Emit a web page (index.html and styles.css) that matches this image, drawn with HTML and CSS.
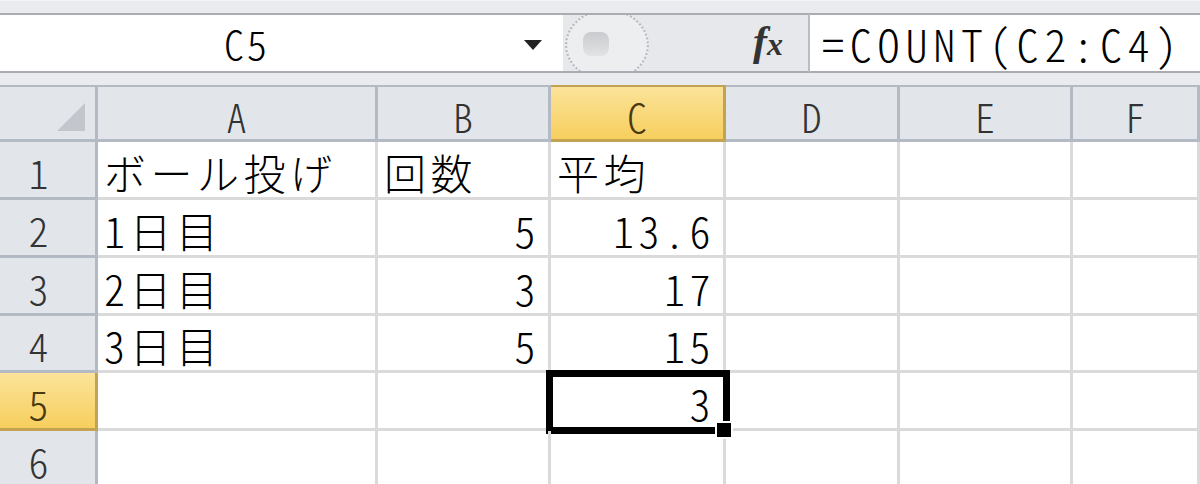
FILE: index.html
```html
<!DOCTYPE html>
<html lang="ja">
<head>
    <meta charset="UTF-8">
    <meta name="viewport" content="width=device-width, initial-scale=1.0">
    <title>ボール投げ</title>
    <link rel="stylesheet" href="styles.css">
</head>
<body>

<div class="formula-bar">
    <div class="name-box">
        <span class="name-text">C5</span>
        <span class="drop-arrow"></span>
    </div>
    <div class="bar-mid">
        <span class="round-btn"><span class="btn-dot"></span></span>
        <span class="fx">f<span class="fx-x">x</span></span>
    </div>
    <div class="formula-input">=COUNT(C2:C4)</div>
</div>

<div class="sheet">
    <div class="corner"><span class="corner-tri"></span></div>
    <div class="col-head">A</div>
    <div class="col-head">B</div>
    <div class="col-head active">C</div>
    <div class="col-head">D</div>
    <div class="col-head">E</div>
    <div class="col-head">F</div>

    <div class="row-head">1</div>
    <div class="cell">ボール投げ</div>
    <div class="cell">回数</div>
    <div class="cell">平均</div>
    <div class="cell"></div>
    <div class="cell"></div>
    <div class="cell"></div>

    <div class="row-head">2</div>
    <div class="cell">1日目</div>
    <div class="cell num">5</div>
    <div class="cell num">13.6</div>
    <div class="cell"></div>
    <div class="cell"></div>
    <div class="cell"></div>

    <div class="row-head">3</div>
    <div class="cell">2日目</div>
    <div class="cell num">3</div>
    <div class="cell num">17</div>
    <div class="cell"></div>
    <div class="cell"></div>
    <div class="cell"></div>

    <div class="row-head">4</div>
    <div class="cell">3日目</div>
    <div class="cell num">5</div>
    <div class="cell num">15</div>
    <div class="cell"></div>
    <div class="cell"></div>
    <div class="cell"></div>

    <div class="row-head active">5</div>
    <div class="cell"></div>
    <div class="cell"></div>
    <div class="cell num selected">3
        <span class="sel-box"></span>
        <span class="fill-handle"></span>
    </div>
    <div class="cell"></div>
    <div class="cell"></div>
    <div class="cell"></div>

    <div class="row-head">6</div>
    <div class="cell"></div>
    <div class="cell"></div>
    <div class="cell"></div>
    <div class="cell"></div>
    <div class="cell"></div>
    <div class="cell"></div>
</div>

</body>
</html>
```

FILE: styles.css
```css
body {
    margin: 0;
    width: 1200px;
    height: 484px;
    overflow: hidden;
    background-color: #ffffff;
    font-family: "Noto Sans CJK JP", "Noto Sans", sans-serif;
    font-feature-settings: "hwid";
    font-weight: 300;
    color: #000;
}
.formula-bar {
    display: flex;
    height: 85px;
    box-sizing: border-box;
    padding-top: 12px;
    padding-bottom: 13px;
    background-color: #e9ebee;
    border-top: 1px solid #f4f5f7;
}
.formula-bar > div {
    border-top: 2px solid #a9adb3;
    border-bottom: 2px solid #a9adb3;
    box-sizing: border-box;
    height: 60px;
}
.name-box {
    width: 563px;
    background-color: #fff;
    display: flex;
    align-items: center;
    position: relative;
}
.name-text {
    font-size: 40px;
    line-height: 1;
    letter-spacing: 3px;
    margin-left: 224px;
}
.drop-arrow {
    position: absolute;
    left: 524px;
    top: 25px;
    width: 0;
    height: 0;
    border-left: 9px solid transparent;
    border-right: 9px solid transparent;
    border-top: 10px solid #222;
}
.bar-mid {
    width: 247px;
    background-color: #e6e8eb;
    position: relative;
    border-right: 2px solid #b9bdc3;
    overflow: hidden;
}
.round-btn {
    position: absolute;
    left: 2px;
    top: -6px;
    width: 80px;
    height: 68px;
    border-radius: 50%;
    border: 2px dotted #b5b8bd;
    background-color: #eceef0;
}
.btn-dot {
    position: absolute;
    left: 16px;
    top: 21px;
    width: 26px;
    height: 24px;
    border-radius: 8px;
    background: linear-gradient(#c9cbce, #e1e3e5);
}
.fx {
    position: absolute;
    left: 190px;
    top: 2px;
    font-family: "Liberation Serif", serif;
    font-style: italic;
    font-weight: bold;
    font-size: 42px;
    color: #333;
    font-feature-settings: normal;
}
.fx-x {
    font-size: 32px;
    margin-left: 0;
}
.formula-input {
    flex: 1;
    background-color: #fff;
    font-size: 44px;
    line-height: 1;
    letter-spacing: 5.8px;
    padding-left: 12px;
    display: flex;
    align-items: center;
    white-space: nowrap;
}
.sheet {
    display: grid;
    grid-template-columns: 98px 280px 173px 175px 174px 173px 127px;
    grid-template-rows: 57px 58px 58px 58px 57px 58px 58px;
}
.corner, .col-head, .row-head {
    background-color: #e2e5ea;
    box-sizing: border-box;
    color: #333;
}
.corner {
    position: relative;
    border-right: 3px solid #b3bac3;
    border-bottom: 3px solid #b3bac3;
    border-top: 2px solid #b3bac3;
}
.corner-tri {
    position: absolute;
    left: 57px;
    top: 16px;
    width: 0;
    height: 0;
    border-left: 28px solid transparent;
    border-bottom: 28px solid #c3c7cd;
}
.col-head {
    border-top: 2px solid #b3bac3;
    border-right: 3px solid #b3bac3;
    border-bottom: 3px solid #b3bac3;
    font-size: 40px;
    line-height: 1;
    display: flex;
    justify-content: center;
    align-items: center;
    padding-top: 6px;
}
.row-head {
    border-right: 3px solid #b3bac3;
    border-bottom: 3px solid #b3bac3;
    font-size: 40px;
    line-height: 1;
    display: flex;
    justify-content: center;
    align-items: center;
    padding-right: 18px;
    padding-top: 4px;
}
.col-head.active, .row-head.active {
    background: linear-gradient(#fbe39a, #f7cf5e);
    border-color: #c2a352;
    color: #4a3a10;
}
.cell {
    border-right: 3px solid #dadada;
    border-bottom: 3px solid #dadada;
    box-sizing: border-box;
    font-size: 42px;
    line-height: 1;
    letter-spacing: 4.5px;
    display: flex;
    align-items: flex-end;
    padding: 0 8px 4px 6px;
    white-space: nowrap;
    position: relative;
}
.cell.num {
    justify-content: flex-end;
    padding-right: 8px;
}
.sel-box {
    position: absolute;
    left: -5px;
    top: -3px;
    right: -7px;
    bottom: -6px;
    border: 7px solid #000;
}
.fill-handle {
    position: absolute;
    right: -10px;
    bottom: -11px;
    width: 14px;
    height: 14px;
    background-color: #000;
    border: 2px solid #fff;
    z-index: 2;
}
```
